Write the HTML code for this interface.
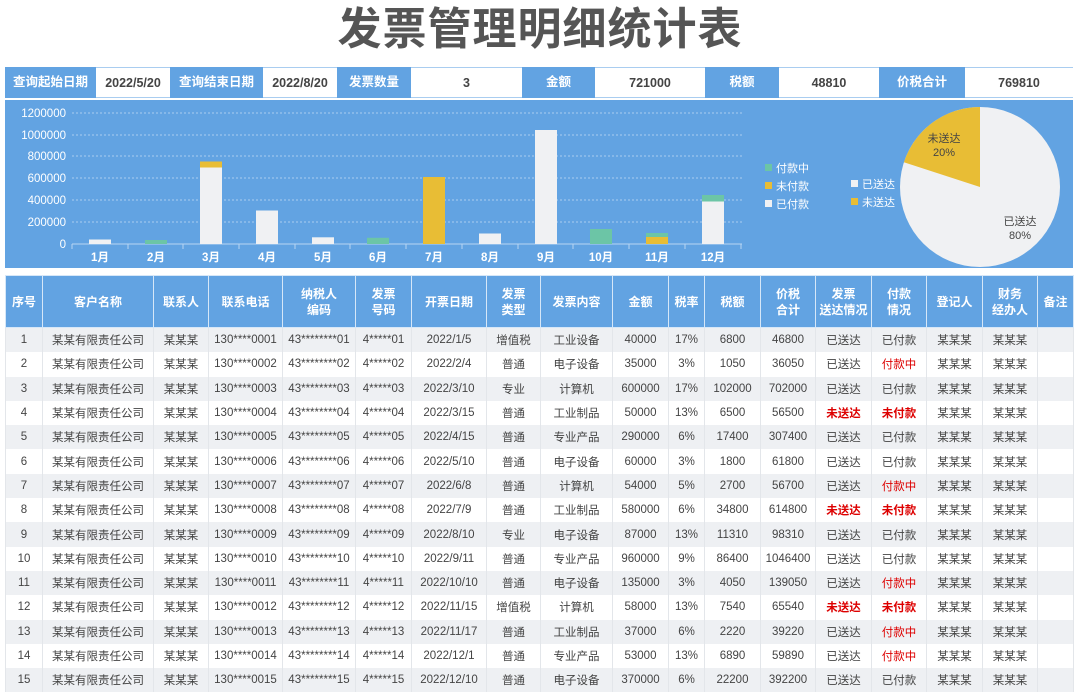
<!DOCTYPE html>
<html><head><meta charset="utf-8"><style>
body{margin:0;width:1080px;height:697px;background:#fff;font-family:"Liberation Sans","Noto Sans CJK SC",sans-serif;position:relative;overflow:hidden}
.title{position:absolute;top:3px;left:0;width:1080px;text-align:center;font-size:44px;font-weight:bold;color:#555;letter-spacing:1px;line-height:54px}
.top{position:absolute;top:67px;left:5px;height:31px;display:flex}
.top div{height:31px;line-height:31px;text-align:center;font-size:12.5px;box-sizing:border-box}
.top .k{background:#62a3e2;color:#fff;font-weight:bold}
.top .v{background:#fff;color:#444;border-top:1px solid #a9cdf0;border-bottom:1px solid #a9cdf0;font-weight:bold}
.panel{position:absolute;left:5px;top:100px;width:1068px;height:168px;background:#62a3e2}
table{position:absolute;left:5px;top:275px;border-collapse:collapse;table-layout:fixed;width:1068px}
td,th{font-size:11.5px;text-align:center;padding:0;white-space:nowrap;overflow:hidden}
th{background:#62a3e2;color:#fff;height:51px;border:1px solid #d6e7f8;line-height:16px;font-size:12px}
td{height:24.3px;color:#444;border-left:1px solid #e3e6ea;border-right:1px solid #e3e6ea}
tr:nth-child(even) td{background:#eef0f3}
.r{color:#d00;font-weight:bold}.p{color:#d00}
</style></head><body>
<div class="title">发票管理明细统计表</div>
<div class="top">
<div class="k" style="width:91px">查询起始日期</div><div class="v" style="width:74px">2022/5/20</div>
<div class="k" style="width:93px">查询结束日期</div><div class="v" style="width:74px">2022/8/20</div>
<div class="k" style="width:74px">发票数量</div><div class="v" style="width:111px">3</div>
<div class="k" style="width:73px">金额</div><div class="v" style="width:110px">721000</div>
<div class="k" style="width:74px">税额</div><div class="v" style="width:100px">48810</div>
<div class="k" style="width:86px">价税合计</div><div class="v" style="width:108px">769810</div>
</div>
<div class="panel"><svg width="1068" height="168" style="position:absolute;left:0;top:0"><g transform="translate(-5,-100)" font-family="Liberation Sans,Noto Sans CJK SC,sans-serif" font-size="11" fill="#fff">
<g stroke="#a9cdf0" stroke-dasharray="2,2" stroke-width="1">
<line x1="72" y1="113" x2="742" y2="113"/><line x1="72" y1="135" x2="742" y2="135"/><line x1="72" y1="156" x2="742" y2="156"/><line x1="72" y1="178" x2="742" y2="178"/><line x1="72" y1="200" x2="742" y2="200"/><line x1="72" y1="222" x2="742" y2="222"/></g>
<line x1="72" y1="244" x2="742" y2="244" stroke="#b8d6f3"/>
<g stroke="#b8d6f3"><line x1="72" y1="244" x2="72" y2="249"/><line x1="128" y1="244" x2="128" y2="249"/><line x1="183" y1="244" x2="183" y2="249"/><line x1="239" y1="244" x2="239" y2="249"/><line x1="295" y1="244" x2="295" y2="249"/><line x1="350" y1="244" x2="350" y2="249"/><line x1="406" y1="244" x2="406" y2="249"/><line x1="462" y1="244" x2="462" y2="249"/><line x1="518" y1="244" x2="518" y2="249"/><line x1="573" y1="244" x2="573" y2="249"/><line x1="629" y1="244" x2="629" y2="249"/><line x1="685" y1="244" x2="685" y2="249"/><line x1="741" y1="244" x2="741" y2="249"/></g>
<g text-anchor="end" font-size="11.5"><text x="66" y="117">1200000</text><text x="66" y="139">1000000</text><text x="66" y="160">800000</text><text x="66" y="182">600000</text><text x="66" y="204">400000</text><text x="66" y="226">200000</text><text x="66" y="248">0</text></g>
<g text-anchor="middle" font-size="11.5" font-weight="bold"><text x="100" y="261">1月</text><text x="156" y="261">2月</text><text x="211" y="261">3月</text><text x="267" y="261">4月</text><text x="323" y="261">5月</text><text x="378" y="261">6月</text><text x="434" y="261">7月</text><text x="490" y="261">8月</text><text x="546" y="261">9月</text><text x="601" y="261">10月</text><text x="657" y="261">11月</text><text x="713" y="261">12月</text></g>
<rect x="89" y="239.5" width="22" height="4.5" fill="#f0f1f3"/>
<rect x="145" y="240" width="22" height="4" fill="#6cc5a6"/>
<rect x="200" y="167.5" width="22" height="76.5" fill="#f0f1f3"/><rect x="200" y="161.5" width="22" height="6" fill="#e8bd35"/>
<rect x="256" y="210.5" width="22" height="33.5" fill="#f0f1f3"/>
<rect x="312" y="237.3" width="22" height="6.7" fill="#f0f1f3"/>
<rect x="367" y="237.8" width="22" height="6.2" fill="#6cc5a6"/>
<rect x="423" y="177" width="22" height="67" fill="#e8bd35"/>
<rect x="479" y="233.5" width="22" height="10.5" fill="#f0f1f3"/>
<rect x="535" y="130" width="22" height="114" fill="#f0f1f3"/>
<rect x="590" y="229" width="22" height="15" fill="#6cc5a6"/>
<rect x="646" y="237" width="22" height="7" fill="#e8bd35"/><rect x="646" y="233" width="22" height="4" fill="#6cc5a6"/>
<rect x="702" y="201.5" width="22" height="42.5" fill="#f0f1f3"/><rect x="702" y="195" width="22" height="6.5" fill="#6cc5a6"/>
<rect x="765" y="164" width="7" height="7" fill="#6cc5a6"/><text x="776" y="172">付款中</text>
<rect x="765" y="182" width="7" height="7" fill="#e8bd35"/><text x="776" y="190">未付款</text>
<rect x="765" y="200" width="7" height="7" fill="#f0f1f3"/><text x="776" y="208">已付款</text>
<circle cx="980" cy="187" r="80" fill="#f0f1f3"/>
<path d="M980,187 L980,107 A80,80 0 0 0 903.9,162.3 Z" fill="#e8bd35"/>
<g text-anchor="middle" fill="#444" font-size="11"><text x="944" y="142">未送达</text><text x="944" y="156">20%</text><text x="1020" y="225">已送达</text><text x="1020" y="239">80%</text></g>
<rect x="851" y="180" width="7" height="7" fill="#f0f1f3"/><text x="862" y="188">已送达</text>
<rect x="851" y="198" width="7" height="7" fill="#e8bd35"/><text x="862" y="206">未送达</text>
</g></svg></div>
<table>
<colgroup><col style="width:37px"><col style="width:111px"><col style="width:55px"><col style="width:74px"><col style="width:73px"><col style="width:56px"><col style="width:75px"><col style="width:54px"><col style="width:72px"><col style="width:56px"><col style="width:36px"><col style="width:56px"><col style="width:55px"><col style="width:56px"><col style="width:55px"><col style="width:56px"><col style="width:55px"><col style="width:36px"></colgroup>
<tr><th>序号</th><th>客户名称</th><th>联系人</th><th>联系电话</th><th>纳税人<br>编码</th><th>发票<br>号码</th><th>开票日期</th><th>发票<br>类型</th><th>发票内容</th><th>金额</th><th>税率</th><th>税额</th><th>价税<br>合计</th><th>发票<br>送达情况</th><th>付款<br>情况</th><th>登记人</th><th>财务<br>经办人</th><th>备注</th></tr>
<tr><td>1</td><td>某某有限责任公司</td><td>某某某</td><td>130****0001</td><td>43********01</td><td>4*****01</td><td>2022/1/5</td><td>增值税</td><td>工业设备</td><td>40000</td><td>17%</td><td>6800</td><td>46800</td><td>已送达</td><td>已付款</td><td>某某某</td><td>某某某</td><td></td></tr>
<tr><td>2</td><td>某某有限责任公司</td><td>某某某</td><td>130****0002</td><td>43********02</td><td>4*****02</td><td>2022/2/4</td><td>普通</td><td>电子设备</td><td>35000</td><td>3%</td><td>1050</td><td>36050</td><td>已送达</td><td class="p">付款中</td><td>某某某</td><td>某某某</td><td></td></tr>
<tr><td>3</td><td>某某有限责任公司</td><td>某某某</td><td>130****0003</td><td>43********03</td><td>4*****03</td><td>2022/3/10</td><td>专业</td><td>计算机</td><td>600000</td><td>17%</td><td>102000</td><td>702000</td><td>已送达</td><td>已付款</td><td>某某某</td><td>某某某</td><td></td></tr>
<tr><td>4</td><td>某某有限责任公司</td><td>某某某</td><td>130****0004</td><td>43********04</td><td>4*****04</td><td>2022/3/15</td><td>普通</td><td>工业制品</td><td>50000</td><td>13%</td><td>6500</td><td>56500</td><td class="r">未送达</td><td class="r">未付款</td><td>某某某</td><td>某某某</td><td></td></tr>
<tr><td>5</td><td>某某有限责任公司</td><td>某某某</td><td>130****0005</td><td>43********05</td><td>4*****05</td><td>2022/4/15</td><td>普通</td><td>专业产品</td><td>290000</td><td>6%</td><td>17400</td><td>307400</td><td>已送达</td><td>已付款</td><td>某某某</td><td>某某某</td><td></td></tr>
<tr><td>6</td><td>某某有限责任公司</td><td>某某某</td><td>130****0006</td><td>43********06</td><td>4*****06</td><td>2022/5/10</td><td>普通</td><td>电子设备</td><td>60000</td><td>3%</td><td>1800</td><td>61800</td><td>已送达</td><td>已付款</td><td>某某某</td><td>某某某</td><td></td></tr>
<tr><td>7</td><td>某某有限责任公司</td><td>某某某</td><td>130****0007</td><td>43********07</td><td>4*****07</td><td>2022/6/8</td><td>普通</td><td>计算机</td><td>54000</td><td>5%</td><td>2700</td><td>56700</td><td>已送达</td><td class="p">付款中</td><td>某某某</td><td>某某某</td><td></td></tr>
<tr><td>8</td><td>某某有限责任公司</td><td>某某某</td><td>130****0008</td><td>43********08</td><td>4*****08</td><td>2022/7/9</td><td>普通</td><td>工业制品</td><td>580000</td><td>6%</td><td>34800</td><td>614800</td><td class="r">未送达</td><td class="r">未付款</td><td>某某某</td><td>某某某</td><td></td></tr>
<tr><td>9</td><td>某某有限责任公司</td><td>某某某</td><td>130****0009</td><td>43********09</td><td>4*****09</td><td>2022/8/10</td><td>专业</td><td>电子设备</td><td>87000</td><td>13%</td><td>11310</td><td>98310</td><td>已送达</td><td>已付款</td><td>某某某</td><td>某某某</td><td></td></tr>
<tr><td>10</td><td>某某有限责任公司</td><td>某某某</td><td>130****0010</td><td>43********10</td><td>4*****10</td><td>2022/9/11</td><td>普通</td><td>专业产品</td><td>960000</td><td>9%</td><td>86400</td><td>1046400</td><td>已送达</td><td>已付款</td><td>某某某</td><td>某某某</td><td></td></tr>
<tr><td>11</td><td>某某有限责任公司</td><td>某某某</td><td>130****0011</td><td>43********11</td><td>4*****11</td><td>2022/10/10</td><td>普通</td><td>电子设备</td><td>135000</td><td>3%</td><td>4050</td><td>139050</td><td>已送达</td><td class="p">付款中</td><td>某某某</td><td>某某某</td><td></td></tr>
<tr><td>12</td><td>某某有限责任公司</td><td>某某某</td><td>130****0012</td><td>43********12</td><td>4*****12</td><td>2022/11/15</td><td>增值税</td><td>计算机</td><td>58000</td><td>13%</td><td>7540</td><td>65540</td><td class="r">未送达</td><td class="r">未付款</td><td>某某某</td><td>某某某</td><td></td></tr>
<tr><td>13</td><td>某某有限责任公司</td><td>某某某</td><td>130****0013</td><td>43********13</td><td>4*****13</td><td>2022/11/17</td><td>普通</td><td>工业制品</td><td>37000</td><td>6%</td><td>2220</td><td>39220</td><td>已送达</td><td class="p">付款中</td><td>某某某</td><td>某某某</td><td></td></tr>
<tr><td>14</td><td>某某有限责任公司</td><td>某某某</td><td>130****0014</td><td>43********14</td><td>4*****14</td><td>2022/12/1</td><td>普通</td><td>专业产品</td><td>53000</td><td>13%</td><td>6890</td><td>59890</td><td>已送达</td><td class="p">付款中</td><td>某某某</td><td>某某某</td><td></td></tr>
<tr><td>15</td><td>某某有限责任公司</td><td>某某某</td><td>130****0015</td><td>43********15</td><td>4*****15</td><td>2022/12/10</td><td>普通</td><td>电子设备</td><td>370000</td><td>6%</td><td>22200</td><td>392200</td><td>已送达</td><td>已付款</td><td>某某某</td><td>某某某</td><td></td></tr>
</table>
</body></html>
